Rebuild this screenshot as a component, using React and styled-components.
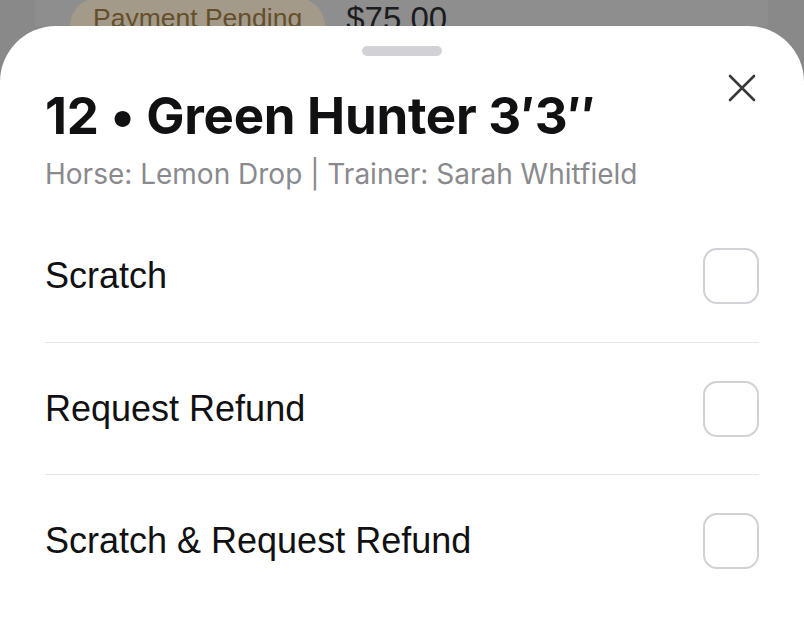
import React from "react";
import styled, { createGlobalStyle } from "styled-components";

const GlobalStyle = createGlobalStyle`
  html, body {
    margin: 0;
    padding: 0;
    background: #898989;
  }
  body {
    font-family: Inter, "Liberation Sans", sans-serif;
    -webkit-font-smoothing: antialiased;
  }
`;

const Screen = styled.div`
  width: 804px;
  height: 626px;
  overflow: hidden;
  display: flex;
  flex-direction: column;
`;

const BehindCard = styled.div`
  height: 26px;
  margin: 0 36px 0 35px;
  background: #8e8e8e;
  display: flex;
  align-items: flex-start;
  gap: 21px;
  padding-left: 35px;
  overflow: hidden;
`;

const Badge = styled.div`
  flex-shrink: 0;
  background: #a39a89;
  color: #654f2b;
  font-family: "Liberation Sans", Arial, sans-serif;
  font-size: 26.5px;
  padding: 0 23px;
  height: 56px;
  line-height: 40px;
  border-radius: 28px;
  margin-top: -2px;
`;

const Price = styled.div`
  color: #1c1c1e;
  font-family: "Liberation Sans", Arial, sans-serif;
  font-size: 33px;
  line-height: 40px;
  margin-top: -1px;
`;

const Sheet = styled.div`
  flex: 1;
  background: #ffffff;
  border-radius: 56px 56px 0 0;
  padding: 0 45px;
  display: flex;
  flex-direction: column;
`;

const Handle = styled.div`
  width: 80px;
  height: 10px;
  border-radius: 5px;
  background: #d1d1d6;
  align-self: center;
  margin-top: 20px;
`;

const Header = styled.div`
  display: flex;
  align-items: flex-start;
  margin-top: 30px;
`;

const Titles = styled.div`
  flex: 1;
  display: flex;
  flex-direction: column;
  gap: 11px;
`;

const Title = styled.h1`
  margin: 0;
  font-family: Inter, sans-serif;
  font-weight: 700;
  font-size: 51px;
  line-height: 60px;
  color: #111113;
  letter-spacing: -0.25px;
`;

const Subtitle = styled.p`
  margin: 0;
  font-family: Inter, sans-serif;
  font-size: 28px;
  line-height: 34px;
  color: #8a8a8e;
`;

const CloseButton = styled.button`
  width: 40px;
  height: 40px;
  margin-top: -18px;
  margin-right: -3px;
  padding: 0;
  border: none;
  background: none;
  display: flex;
  align-items: center;
  justify-content: center;
  color: #3a3a3c;
`;

const Options = styled.div`
  margin-top: 19px;
  display: flex;
  flex-direction: column;
`;

const Row = styled.label`
  height: 132px;
  display: flex;
  align-items: center;
  justify-content: space-between;
  border-top: ${(p) => (p.$first ? "none" : "1.5px solid #e5e5ea")};
  box-sizing: border-box;
`;

const RowText = styled.span`
  font-family: "Liberation Sans", Arial, sans-serif;
  font-size: 36px;
  color: #111113;
`;

const Check = styled.span`
  width: 56px;
  height: 56px;
  box-sizing: border-box;
  border: 2.5px solid #d1d1d6;
  border-radius: 14px;
  background: #fff;
`;

const options = ["Scratch", "Request Refund", "Scratch & Request Refund"];

export default function App() {
  return (
    <Screen>
      <GlobalStyle />
      <BehindCard>
        <Badge>Payment Pending</Badge>
        <Price>$75.00</Price>
      </BehindCard>
      <Sheet>
        <Handle />
        <Header>
          <Titles>
            <Title>12 • Green Hunter 3′3″</Title>
            <Subtitle>Horse: Lemon Drop | Trainer: Sarah Whitfield</Subtitle>
          </Titles>
          <CloseButton aria-label="Close">
            <svg width="28" height="28" viewBox="0 0 28 28" fill="none">
              <path
                d="M2 2L26 26M26 2L2 26"
                stroke="currentColor"
                strokeWidth="2.6"
                strokeLinecap="round"
              />
            </svg>
          </CloseButton>
        </Header>
        <Options>
          {options.map((o, i) => (
            <Row key={o} $first={i === 0}>
              <RowText>{o}</RowText>
              <Check />
            </Row>
          ))}
        </Options>
      </Sheet>
    </Screen>
  );
}
